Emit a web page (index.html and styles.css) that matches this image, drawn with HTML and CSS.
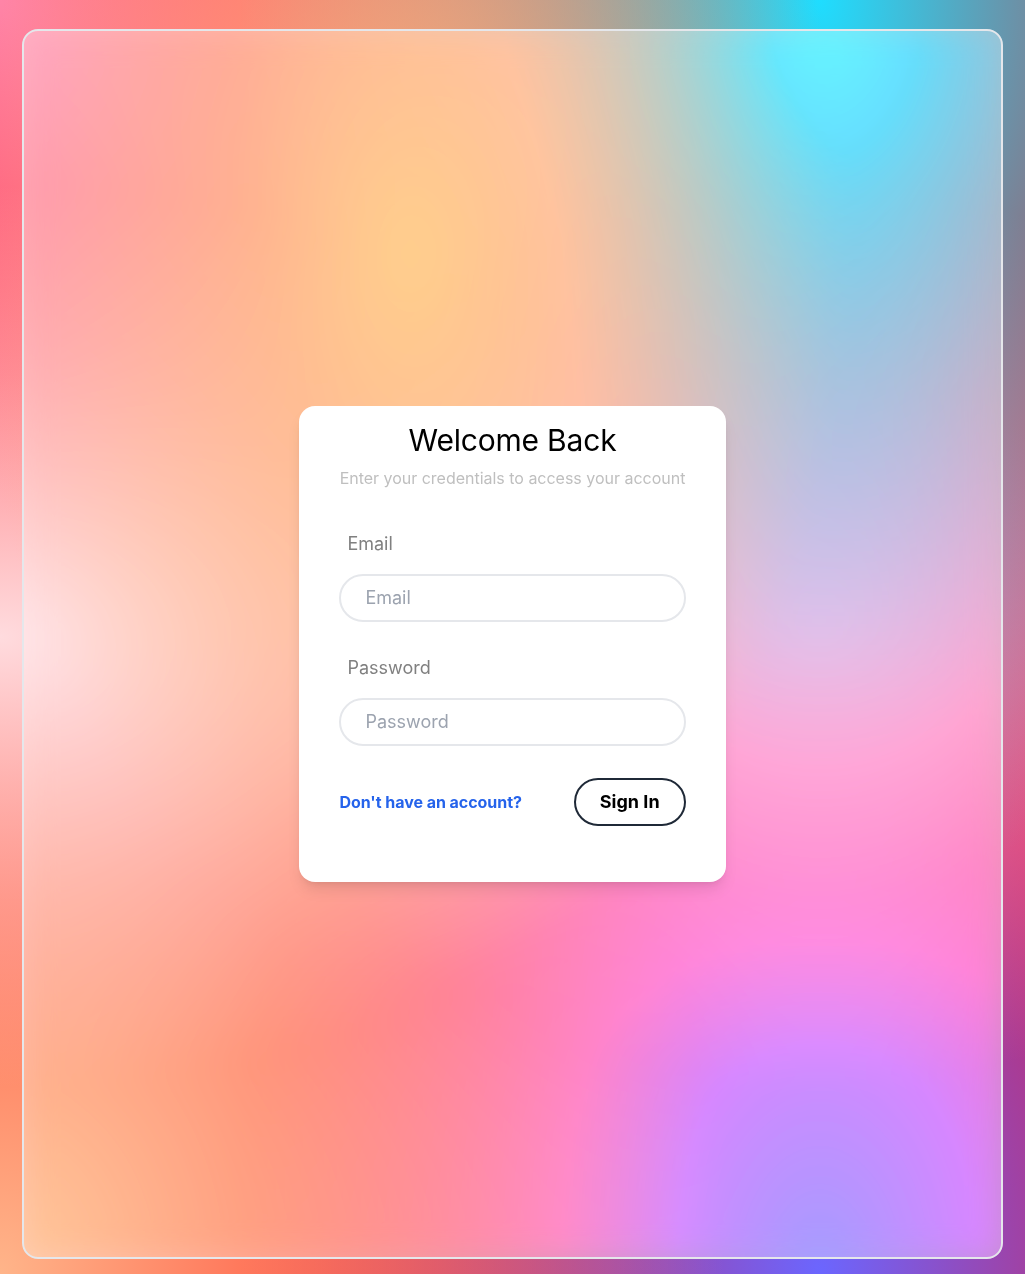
FILE: index.html
```html
<!DOCTYPE html>
<html lang="en">
<head>
<meta charset="utf-8">
<title>Sign In</title>
<link rel="stylesheet" href="styles.css">
</head>
<body>
<div class="page">
  <main class="glass">
    <form class="card">
      <h1 class="title">Welcome Back</h1>
      <p class="subtitle">Enter your credentials to access your account</p>
      <label class="label" for="email">Email</label>
      <input class="field" id="email" type="email" placeholder="Email">
      <label class="label" for="password">Password</label>
      <input class="field" id="password" type="password" placeholder="Password">
      <div class="actions">
        <a class="link" href="#">Don't have an account?</a>
        <button class="button" type="button">Sign In</button>
      </div>
    </form>
  </main>
</div>
</body>
</html>
```
FILE: styles.css
```css
*, *::before, *::after { box-sizing: border-box; }
body { margin: 0; font-family: Inter, sans-serif; color: #000; }
.page {
  height: 1274px;
  padding: 29px 22px 15px;
  display: flex;
  background-color: hsla(0,100%,50%,1);
  background-image:
    radial-gradient(at 40% 20%, hsla(28,100%,74%,1) 0, transparent 50%),
    radial-gradient(at 80% 0%, hsla(189,100%,56%,1) 0, transparent 50%),
    radial-gradient(at 0% 50%, hsla(355,100%,93%,1) 0, transparent 50%),
    radial-gradient(at 80% 50%, hsla(340,100%,76%,1) 0, transparent 50%),
    radial-gradient(at 0% 100%, hsla(22,100%,77%,1) 0, transparent 50%),
    radial-gradient(at 80% 100%, hsla(242,100%,70%,1) 0, transparent 50%),
    radial-gradient(at 0% 0%, hsla(343,100%,76%,1) 0, transparent 50%);
}
.glass {
  flex: 1;
  display: flex;
  align-items: center;
  justify-content: center;
  border: 2px solid #e5e7eb;
  border-radius: 16px;
  background: rgba(255,255,255,.4);
  backdrop-filter: blur(16px) saturate(180%);
}
.card {
  width: 426.2px;
  height: 476px;
  padding: 16px 40px 0;
  display: flex;
  flex-direction: column;
  background: #fff;
  border-radius: 16px;
  box-shadow: 0 10px 15px -3px rgba(0,0,0,.1), 0 4px 6px -4px rgba(0,0,0,.1);
}
.title { margin: 0; font-size: 30px; line-height: 36px; font-weight: 400; letter-spacing: -.2px; text-align: center; }
.subtitle { margin: 8px 0 0; font-size: 16px; line-height: 24px; letter-spacing: -.015px; color: #bfbfbf; text-align: center; white-space: nowrap; }
.label { margin: 40px 0 16px 8px; font-size: 18px; line-height: 28px; color: #808080; }
.field {
  width: 100%; height: 48px; padding: 0 24px 1px;
  border: 2px solid #e5e7eb; border-radius: 24px; background: #fff;
  font: 18px/28px Inter, sans-serif; outline: 0;
}
.field + .label { margin-top: 32px; }
.field::placeholder { color: #9ca3af; opacity: 1; }
.actions { margin-top: 32px; display: flex; align-items: center; justify-content: space-between; }
.link { color: #2563eb; font-size: 16px; line-height: 24px; font-weight: 700; letter-spacing: -.04px; text-decoration: none; }
.button {
  height: 48px; padding: 0 24px; border: 2px solid #1f2937; border-radius: 24px;
  background: #fff; color: #000; font: 700 18px/28px Inter, sans-serif;
}
```
